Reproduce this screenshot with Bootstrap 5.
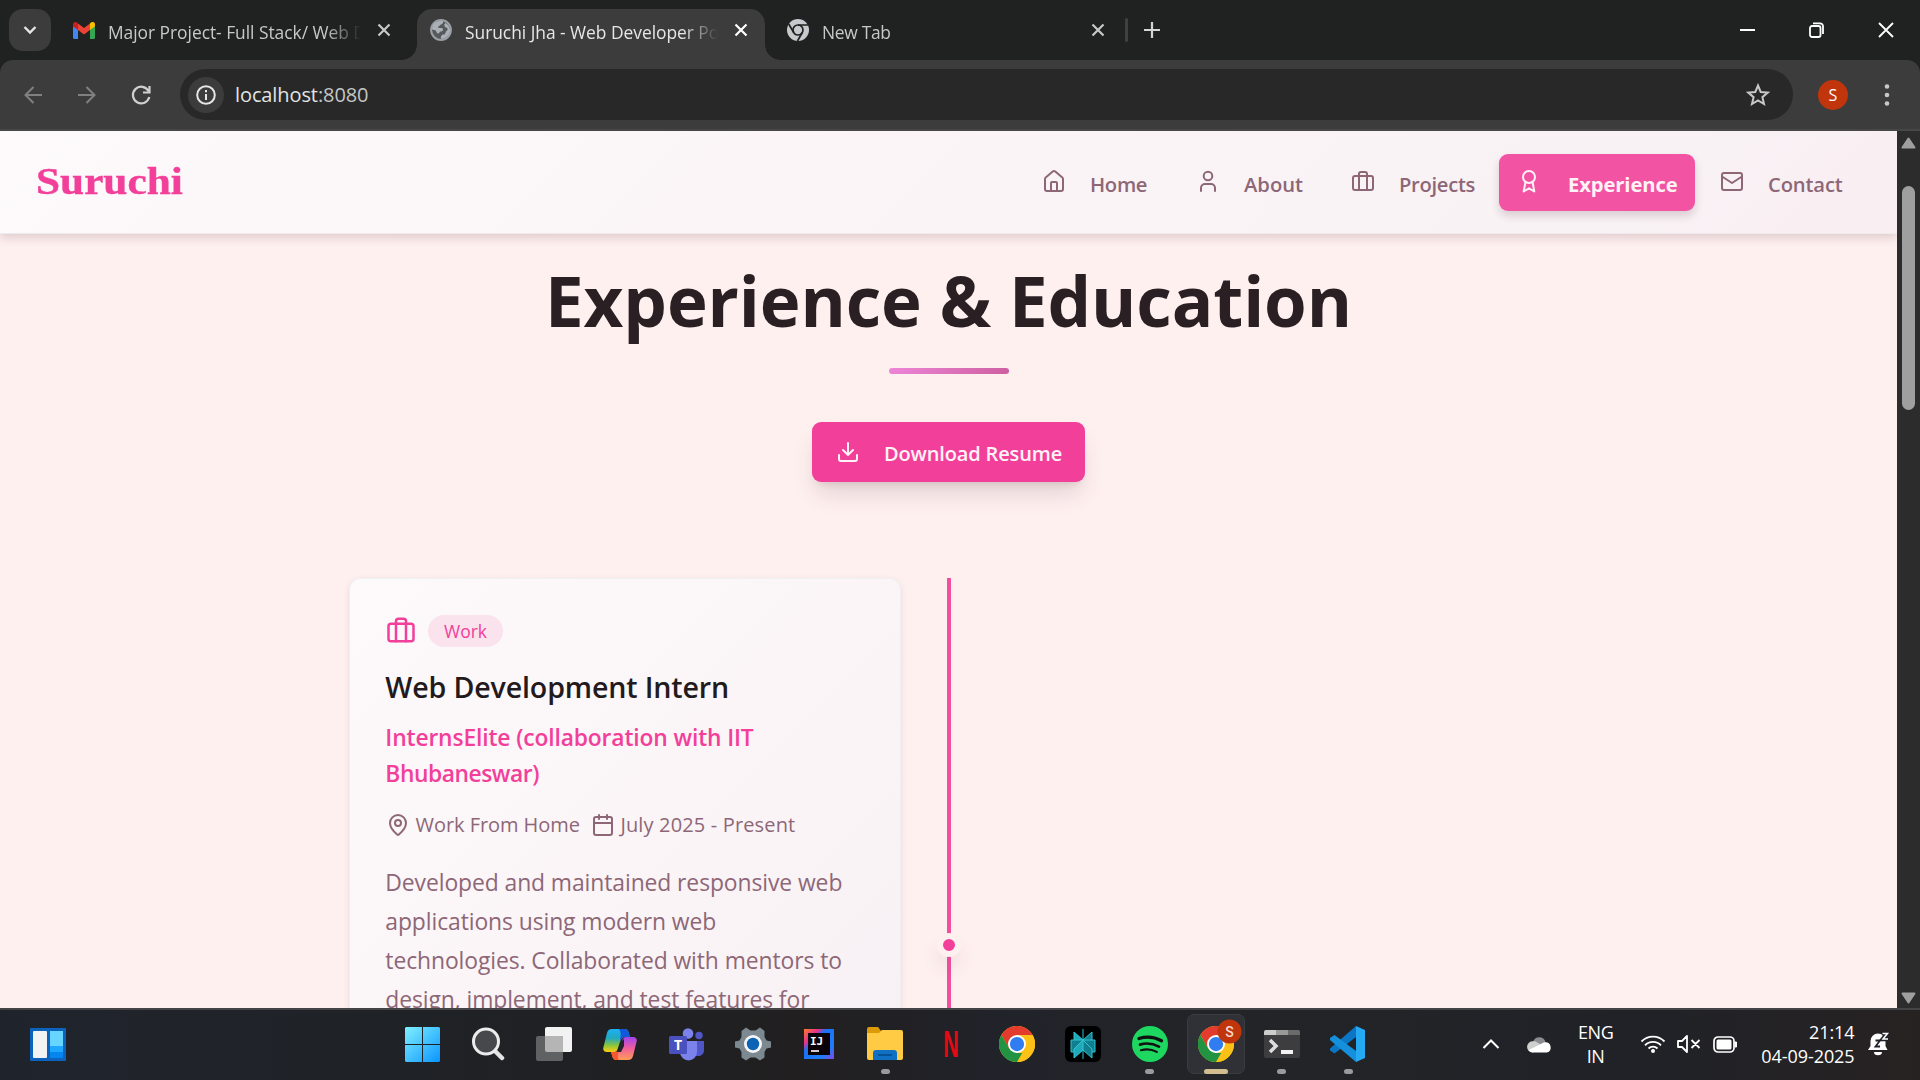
<!DOCTYPE html>
<html lang="en">
<head>
<meta charset="utf-8">
<title>Suruchi Jha - Web Developer Portfolio</title>
<link href="https://cdn.jsdelivr.net/npm/bootstrap@5.3.0/dist/css/bootstrap.min.css" rel="stylesheet">
<style>
:root{--pink:#f2409a;--mauve:#8e6777;--ink:#2a1f23}
body{width:1920px;height:1080px;overflow:hidden;font-family:"Open Sans","Noto Sans",sans-serif;background:#fff0f0}
svg{display:block;flex:none}
.t{white-space:nowrap;display:inline-block}
/* browser chrome */
.tabstrip{height:60px;background:#202221;padding:9px 0 0 9px;color:#c7c9c8;font-size:17.4px}
.tabsearch{width:42px;height:42px;border-radius:14px;background:#3c3c3c}
.btab{height:51px;width:348px;padding:0 17px 9px 13px;position:relative}
.btab.first{width:366px;padding-left:22px;padding-right:26px}
.btab.last{margin-left:9px;width:343px;padding-right:12px}
.btab .ttl{margin-left:13px;overflow:hidden;flex:1 1 0;line-height:28px;padding-top:3px;margin-right:16px;white-space:nowrap;letter-spacing:-.03px;-webkit-mask-image:linear-gradient(90deg,#000 86%,transparent 100%)}
.btab.last .ttl{letter-spacing:-.3px}
.btab.on{background:#3c3c3c;border-radius:15px 15px 0 0;color:#e6e6e6}
.btab.on:before,.btab.on:after{content:"";position:absolute;bottom:0;width:15px;height:15px}
.btab.on:before{left:-15px;background:radial-gradient(circle at 0 0,transparent 14.5px,#3c3c3c 15px)}
.btab.on:after{right:-15px;background:radial-gradient(circle at 100% 0,transparent 14.5px,#3c3c3c 15px)}
.tsep{width:3px;height:24px;border-radius:2px;background:#3f4140;margin:9px 0 0 8px}
.plus{margin:13px 0 0 16px}
.winbtns{margin-left:auto;padding-right:26px;gap:54px;height:41px}
.toolbelt{height:71px;background:#202221}
.toolin{height:71px;background:#3c3c3c;border-radius:13px 13px 0 0;border-bottom:2px solid #474747;padding:9px 20px 9px 20px}
.toolin>svg+svg{margin-left:28px}
.omni{height:51px;width:1613px;border-radius:26px;background:#282828;margin-left:26px;padding:0 23px 0 8px}
.infoc{width:36px;height:36px;border-radius:50%;background:#3c3c3c}
.url{font-size:20px;color:#e3e3e3;margin-left:11px;letter-spacing:-.1px}
.url span{color:#c4c7c5}
.avat{width:30px;height:30px;border-radius:50%;background:#c0350c;color:#fff;font-size:16px;margin-left:25px}
.dots{margin-right:9px}
/* page */
.viewport{height:877px;overflow:hidden}
.site{width:1897px;height:877px;overflow:hidden;background:#fff0f0;position:relative}
.topnav{height:103px;padding:0 36px;background:linear-gradient(135deg,#fdfafb 0%,#fbf5f7 40%,#f8f2f5 85%,#faeef2 100%);border-bottom:1px solid #f0e9ed;box-shadow:0 4px 9px rgba(60,20,30,.16);position:relative;z-index:2}
.logo{font-family:"Liberation Serif",serif;font-weight:700;font-size:37px;color:var(--pink);line-height:40px;transform-origin:0 50%;transform:scaleX(1.17);-webkit-text-stroke:.4px var(--pink)}
.navs{gap:6px}
.navl{height:57px;padding:0 0 0 18px;border-radius:9px;color:var(--mauve);font-size:20.2px;font-weight:600;gap:24px}
.navl svg{margin-bottom:2px}
.navl .t{padding-top:4px}
.navl.on{background:#f353a3;color:#fff3f7;gap:27px;box-shadow:0 5px 9px rgba(60,20,30,.16);letter-spacing:-.1px;font-weight:700}
.w-home{width:148px;letter-spacing:-.3px}.w-about{width:149px}.w-proj{width:160.6px;letter-spacing:-.3px}.w-exp{width:196px;margin-left:-.6px}.w-cont{width:160px;letter-spacing:-.15px}
.w-cont.navl{padding-left:19px}
h1.head{font-size:69px;line-height:72px;font-weight:700;color:var(--ink);margin:30px 0 32px;letter-spacing:-.1px}
.rule{width:120px;height:6px;border-radius:3px;background:linear-gradient(135deg,#ee85d8,#cd5fa0)}
.dl{width:273px;height:60px;border-radius:9px;background:var(--pink);color:#fff3f7;font-size:20px;font-weight:600;margin-top:48px;padding:0 0 0 24px;gap:24px;letter-spacing:-.15px;box-shadow:0 15px 23px -4px rgba(60,20,30,.14),0 6px 9px -6px rgba(60,20,30,.16)}
.dl .t{padding-top:4px}
.tl{margin-top:96px;padding-left:349px;height:500px}
.job{width:552px;height:500px;border:1px solid #eef0f6;border-radius:12px;background:linear-gradient(135deg,#fdfafb 0%,#fbf5f7 50%,#f7f1f5 100%);padding:36px;box-shadow:0 2px 6px rgba(60,20,30,.10)}
.kind{gap:12px;color:var(--pink)}
.kind svg{margin-top:-2px}
.pillw{height:32px;width:75px;border-radius:16px;background:#fae3ed;color:var(--pink);font-size:17.5px;font-weight:500}
.job h3{font-size:28.6px;line-height:36px;font-weight:600;color:#231a1d;margin:22px 0 15px -.7px;letter-spacing:-.15px}
.co{font-size:22.8px;line-height:36px;font-weight:600;color:var(--pink);letter-spacing:-.13px;margin-left:-.7px}
.co .l2{letter-spacing:-.45px}
.meta{font-size:20px;line-height:30px;color:var(--mauve);margin-top:18px;gap:11px;letter-spacing:-.05px}
.meta>span{gap:5.5px}
.meta .when{letter-spacing:.15px}
.meta svg{margin-top:-1px}
.desc{font-size:22.9px;line-height:39px;color:var(--mauve);margin:23px 0 0 -.7px;letter-spacing:-.09px}
.axis{width:3.5px;margin-left:46px;background:#f2509f;position:relative}
.axis i{position:absolute;left:-10px;top:355px;width:24px;height:24px;border-radius:50%;background:var(--pink);border:6px solid #fff0f0;box-shadow:0 12px 18px rgba(60,20,30,.08)}
.sbar{width:23px;background:#2c2c2c;padding:6px 0 4px}
.thumb{width:13px;height:224px;border-radius:7px;background:#9f9f9f;margin-top:37px}
/* taskbar */
.tbar{height:72px;border-top:2px solid #444447;padding-bottom:2px;background:linear-gradient(90deg,#1f242c 0,#20232a 8%,#1f2226 22%,#211f20 42%,#21232a 52%,#222427 66%,#202228 85%,#272222 100%);color:#fff}
.widgets{margin-left:30px}
.apps{margin-left:323px}
.slot{width:66.15px;height:70px;position:relative}
.slot b{position:absolute;bottom:5px;width:9px;height:5px;border-radius:3px;background:#9a9a9c}
.slot.on:before{content:"";position:absolute;inset:5px 4px 5px;border-radius:7px;background:#2f3136;border:1px solid #3a3c40}
.slot.on svg{position:relative}
.slot.on>svg{margin-left:8px}
.slot.on b{width:24px;background:#d2bd90}
.tray>*{flex:none}
.tray{margin-left:100.5px}
.sysx{font-size:18px;line-height:24px;letter-spacing:-.4px}
.clock{width:110px;margin-left:7px;margin-top:-1px}
.clock .t{letter-spacing:-.05px}
.lang{width:50px;margin-left:19px}
</style>
</head>
<body>
<svg width="0" height="0" class="position-absolute"><defs>
<symbol id="x" viewBox="0 0 14 14"><path d="M1.500 1.500l11 11M12.500 1.500l-11 11" stroke="currentColor" stroke-width="2.200" fill="none"/></symbol>
<symbol id="brief" viewBox="0 0 24 24"><g fill="none" stroke="currentColor" stroke-width="2" stroke-linecap="round" stroke-linejoin="round"><rect x="2" y="7" width="20" height="14" rx="2"/><path d="M16 21V5a2 2 0 0 0-2-2h-4a2 2 0 0 0-2 2v16"/></g></symbol>
<symbol id="chrome" viewBox="0 0 48 48"><circle cx="24" cy="24" r="24" fill="#fbc116"/><path d="M24 24L13.600 30 3.200 12A24 24 0 0 1 44.800 12H24z" fill="#e33b2e"/><path d="M3.200 12L13.600 30 24 36h10.400L24 48A24 24 0 0 1 3.200 12z" fill="#229342"/><path d="M24 12h20.800A24 24 0 0 1 24 48l10.400-18z" fill="#fbc116"/><circle cx="24" cy="24" r="12" fill="#fff"/><circle cx="24" cy="24" r="9.500" fill="#2f7df0"/></symbol>
</defs></svg>

<header>
<div class="tabstrip d-flex align-items-start">
  <div class="tabsearch d-flex align-items-center justify-content-center"><svg width="14" height="10" viewBox="0 0 14 10"><path d="M1.500 2L7 7.500 12.500 2" fill="none" stroke="#e6e6e6" stroke-width="2.400"/></svg></div>
  <div class="btab first d-flex align-items-center">
    <svg width="22" height="17" viewBox="0 0 22 17"><path d="M0 3v12.500A1.500 1.500 0 0 0 1.500 17H5V7z" fill="#4285f4"/><path d="M22 3v12.500a1.500 1.500 0 0 1-1.500 1.500H17V7z" fill="#34a853"/><path d="M17 1.500V8l5-3.700V2.400C22 .2 19.500-.8 17.800.6z" fill="#fbbc04"/><path d="M5 8V1.500l6 4.500 6-4.500V8l-6 4.500z" fill="#ea4335"/><path d="M0 2.400v2L5 8V1.500L4.200.7C2.500-.8 0 .2 0 2.400z" fill="#c5221f"/></svg>
    <div class="ttl">Major Project- Full Stack/ Web D</div>
    <svg width="14" height="14"><use href="#x"/></svg>
  </div>
  <div class="btab on d-flex align-items-center">
    <svg width="22" height="22" viewBox="0 0 22 22"><circle cx="11" cy="11" r="9.900" fill="#56595c" stroke="#9aa0a6" stroke-width="2"/><path d="M2 9C3 4 7 2 11 2h2c.5 2-.5 3-2 3.500-1.500.5-1 1.500-2.500 2S8 9 10 9s3 0 3 1.500-1 2-2.500 2S10 15 8 14.500 6.500 11 4.500 11 2 10.500 2 9z" fill="#aab0b6"/><path d="M15.500 4c3 1.500 5 5 4.500 8.500-1 4-4 7-8.500 7.500-1.500-1-.5-3 .5-4s2 0 3-1 0-2 1.500-3 1.500-2 .5-3-2-.500-2.500-2 0-2 1-3z" fill="#aab0b6"/></svg>
    <div class="ttl">Suruchi Jha - Web Developer Po</div>
    <svg width="14" height="14" class="text-white"><use href="#x"/></svg>
  </div>
  <div class="btab last d-flex align-items-center">
    <svg width="22" height="22" viewBox="0 0 22 22"><circle cx="11" cy="11" r="11" fill="#c7c9cc"/><g fill="none" stroke="#202221" stroke-width="1.700"><circle cx="11" cy="11" r="5"/><path d="M11 6h10M6.700 13.500L1.700 5M15.300 13.500L10.500 22"/></g></svg>
    <div class="ttl">New Tab</div>
    <svg width="14" height="14"><use href="#x"/></svg>
  </div>
  <div class="tsep"></div>
  <svg class="plus" width="16" height="16" viewBox="0 0 16 16"><path d="M8 0v16M0 8h16" stroke="#d5d5d5" stroke-width="2.200"/></svg>
  <div class="winbtns d-flex align-items-center">
    <svg width="15" height="16"><path d="M0 8h15" stroke="#fff" stroke-width="2"/></svg>
    <svg width="15" height="16" viewBox="0 0 15 16" fill="none" stroke="#fff" stroke-width="1.800"><rect x="1" y="4" width="10.500" height="11" rx="2"/><path d="M4 1.300h7a3 3 0 0 1 3 3V12"/></svg>
    <svg width="16" height="16"><path d="M1 1l14 14M15 1L1 15" stroke="#fff" stroke-width="1.800"/></svg>
  </div>
</div>
<div class="toolbelt"><div class="toolin d-flex align-items-center">
  <svg width="26" height="20" viewBox="0 0 26 20" fill="none" stroke="#808080" stroke-width="2"><path d="M22 10H6M13.500 2L5.500 10l8 8"/></svg>
  <svg width="26" height="20" viewBox="0 0 26 20" fill="none" stroke="#808080" stroke-width="2"><path d="M4 10h16M12.500 2l8 8-8 8"/></svg>
  <svg width="26" height="22" viewBox="0 0 26 22" fill="none" stroke="#d0d0d0" stroke-width="2.200"><path d="M20.500 7A8.300 8.300 0 1 0 21.300 13M21.500 2v6.500H15"/></svg>
  <div class="omni d-flex align-items-center">
    <div class="infoc d-flex align-items-center justify-content-center"><svg width="20" height="20" viewBox="0 0 20 20"><circle cx="10" cy="10" r="8.800" fill="none" stroke="#e6e6e6" stroke-width="2"/><path d="M10 9v6M10 5v2.200" stroke="#e6e6e6" stroke-width="2"/></svg></div>
    <div class="url"><div class="t">localhost<span>:8080</span></div></div>
    <svg class="ms-auto" width="24" height="24" viewBox="0 0 24 24"><path d="M12 2.500l2.700 6.500 7 .6-5.300 4.600 1.600 6.800-6-3.600L6 21l1.600-6.800L2.300 9.600l7-.6z" fill="none" stroke="#c8c8c8" stroke-width="2"/></svg>
  </div>
  <div class="avat d-flex align-items-center justify-content-center">S</div>
  <svg width="8" height="28" class="dots ms-auto" fill="#c8c8c8"><circle cx="4" cy="5.500" r="2.300"/><circle cx="4" cy="14" r="2.300"/><circle cx="4" cy="22.500" r="2.300"/></svg>
</div></div>
</header>

<div class="viewport d-flex">
<main class="site">
  <nav class="topnav d-flex align-items-center">
    <a class="logo text-decoration-none t me-auto">Suruchi</a>
    <div class="navs d-flex">
      <a class="navl w-home d-flex align-items-center text-decoration-none"><svg width="24" height="24" viewBox="0 0 24 24" fill="none" stroke="currentColor" stroke-width="2" stroke-linecap="round" stroke-linejoin="round"><path d="M3 10a2 2 0 0 1 .7-1.500l7-6a2 2 0 0 1 2.600 0l7 6A2 2 0 0 1 21 10v10a2 2 0 0 1-2 2H5a2 2 0 0 1-2-2z"/><path d="M9 22v-8a1 1 0 0 1 1-1h4a1 1 0 0 1 1 1v8"/></svg><span class="t">Home</span></a>
      <a class="navl w-about d-flex align-items-center text-decoration-none"><svg width="24" height="24" viewBox="0 0 24 24" fill="none" stroke="currentColor" stroke-width="2" stroke-linecap="round"><circle cx="12" cy="7" r="4.300"/><path d="M19 22v-3a4 4 0 0 0-4-4H9a4 4 0 0 0-4 4v3"/></svg><span class="t">About</span></a>
      <a class="navl w-proj d-flex align-items-center text-decoration-none"><svg width="24" height="24"><use href="#brief"/></svg><span class="t">Projects</span></a>
      <a class="navl on w-exp d-flex align-items-center text-decoration-none"><svg width="24" height="24" viewBox="0 0 24 24" fill="none" stroke="currentColor" stroke-width="2" stroke-linecap="round" stroke-linejoin="round"><circle cx="12" cy="8" r="6"/><path d="M15.500 12.900L17.300 22.500 12 19.300l-5.300 3.200L8.500 12.900"/></svg><span class="t">Experience</span></a>
      <a class="navl w-cont d-flex align-items-center text-decoration-none"><svg width="24" height="24" viewBox="0 0 24 24" fill="none" stroke="currentColor" stroke-width="2" stroke-linecap="round" stroke-linejoin="round"><rect x="2" y="4" width="20" height="17" rx="2"/><path d="M22 7.500l-10 6.500L2 7.500"/></svg><span class="t">Contact</span></a>
    </div>
  </nav>
  <div class="d-flex flex-column align-items-center">
    <h1 class="head"><span class="t">Experience &amp; Education</span></h1>
    <div class="rule"></div>
    <a class="dl d-flex align-items-center text-decoration-none"><svg width="24" height="24" viewBox="0 0 24 24" fill="none" stroke="currentColor" stroke-width="2" stroke-linecap="round" stroke-linejoin="round"><path d="M21 15v4a2 2 0 0 1-2 2H5a2 2 0 0 1-2-2v-4M7 10l5 5 5-5M12 15V3"/></svg><span class="t">Download Resume</span></a>
  </div>
  <section class="tl d-flex">
    <article class="job">
      <div class="kind d-flex align-items-center"><svg width="30" height="30"><use href="#brief"/></svg><span class="pillw d-flex align-items-center justify-content-center">Work</span></div>
      <h3>Web Development Intern</h3>
      <div class="co"><span class="t">InternsElite (collaboration with IIT</span><br><span class="t l2">Bhubaneswar)</span></div>
      <div class="meta d-flex">
        <span class="d-flex align-items-center"><svg width="24" height="24" viewBox="0 0 24 24" fill="none" stroke="currentColor" stroke-width="2"><path d="M20 10c0 5-5.500 10.200-7.400 11.800a1 1 0 0 1-1.200 0C9.500 20.200 4 15 4 10a8 8 0 0 1 16 0"/><circle cx="12" cy="10" r="3"/></svg><span class="t">Work From Home</span></span>
        <span class="when d-flex align-items-center"><svg width="24" height="24" viewBox="0 0 24 24" fill="none" stroke="currentColor" stroke-width="2" stroke-linecap="round"><rect x="3" y="4" width="18" height="18" rx="2"/><path d="M8 2v4M16 2v4M3 10h18"/></svg><span class="t">July 2025 - Present</span></span>
      </div>
      <div class="desc"><span class="t">Developed and maintained responsive web</span><br><span class="t">applications using modern web</span><br><span class="t">technologies. Collaborated with mentors to</span><br><span class="t">design, implement, and test features for</span></div>
    </article>
    <div class="axis"><i></i></div>
  </section>
</main>
<div class="sbar d-flex flex-column align-items-center">
  <svg width="15" height="12"><path d="M7.500 1.500L13.500 10.500H1.500z" fill="#9f9f9f" stroke="#9f9f9f" stroke-width="2" stroke-linejoin="round"/></svg>
  <div class="thumb"></div>
  <svg class="mt-auto" width="15" height="12"><path d="M7.500 10.500L13.500 1.500H1.500z" fill="#9f9f9f" stroke="#9f9f9f" stroke-width="2" stroke-linejoin="round"/></svg>
</div>
</div>

<footer class="tbar d-flex align-items-center">
  <svg class="widgets" width="36" height="33" viewBox="0 0 36 33"><rect width="36" height="33" rx="1" fill="#0b63bb"/><rect x="3" y="3" width="14" height="27" rx="1" fill="#f3f3f3"/><path d="M20 3h13v15H20z" fill="#66d5ff"/><path d="M20 18h13v6H20z" fill="#1ea7ff"/><path d="M20 24h13v6H20z" fill="#0585ee"/></svg>
  <div class="apps d-flex">
    <div class="slot d-flex align-items-center justify-content-center"><svg width="35" height="35" viewBox="0 0 35 35"><defs><linearGradient id="wg" x1="0" y1="0" x2="35" y2="35" gradientUnits="userSpaceOnUse"><stop stop-color="#80f0ff"/><stop offset="1" stop-color="#0a95ff"/></linearGradient></defs><path d="M1 0h16v17H0V1zM18 0h16l1 1v16H18zM0 18h17v17H1l-1-1zM18 18h17v16l-1 1H18z" fill="url(#wg)"/></svg></div>
    <div class="slot d-flex align-items-center justify-content-center"><svg width="34" height="34" viewBox="0 0 34 34"><path d="M23 23l8 8" stroke="#e3e3e3" stroke-width="4.500" stroke-linecap="round"/><circle cx="15" cy="14.500" r="12.500" fill="#46484b" stroke="#ececec" stroke-width="3"/></svg></div>
    <div class="slot d-flex align-items-center justify-content-center"><svg width="36" height="34" viewBox="0 0 36 34"><rect x="9" y="0" width="27" height="25" rx="2" fill="#f2f2f2"/><rect x="0" y="9" width="27" height="25" rx="2" fill="#606163"/><path d="M9 9h16a2 2 0 0 1 2 2v14H11a2 2 0 0 1-2-2z" fill="#b5b5b5"/></svg></div>
    <div class="slot d-flex align-items-center justify-content-center"><svg width="34" height="31" viewBox="0 0 34 31"><defs><linearGradient id="c1" x1="0" y1="0" x2="0" y2="1"><stop stop-color="#1bb2f2"/><stop offset=".4" stop-color="#22a8c0"/><stop offset=".7" stop-color="#86c440"/><stop offset="1" stop-color="#ffcd12"/></linearGradient><linearGradient id="c2" x1="0" y1="0" x2="0" y2="1"><stop stop-color="#a044f0"/><stop offset=".5" stop-color="#f25f9a"/><stop offset="1" stop-color="#ff9d55"/></linearGradient></defs><path d="M9 0h13c2 0 3 1.500 3.500 3L27 8h-5c-3 0-4 2-5 5l-2 6c-1 3-2 4-4 4H4c-3 0-4.500-2-3.500-5L4 4c.8-2.500 2-4 5-4z" fill="url(#c1)"/><path d="M16 0h6c2 0 3 1.500 3.500 3L27 8h-5c-3 0-4 1.500-5 4 0-4 2-8-1-12z" fill="#1358d8"/><path d="M25 31H13c-2 0-3-1.500-3.500-3L8 23h4c3 0 4-2 5-5l2-6c1-3 2-4 4-4h7c3 0 4.500 2 3.500 5L30 27c-.8 2.500-2 4-5 4z" fill="url(#c2)"/><path d="M8 23h4c2 0 3-1 4-2-1 4-2 8 0 10h-3c-2 0-3-1.500-3.500-3z" fill="#f7582f"/><path d="M17.500 13L21 10v7l-3 6h-4z" fill="#22242a"/></svg></div>
    <div class="slot d-flex align-items-center justify-content-center"><svg width="36" height="33" viewBox="0 0 36 33"><circle cx="30" cy="7.500" r="3.700" fill="#4e56c8"/><circle cx="19" cy="5.500" r="5.300" fill="#7b83eb"/><path d="M27 13h8v9.500c0 3.500-3 5.500-5.500 5.500H26z" fill="#4e56c8"/><path d="M11 13h17v11a8.500 8.500 0 0 1-17 0z" fill="#7b83eb"/><rect x="0" y="8" width="18" height="18" rx="1.500" fill="#4a50bd"/><text x="9" y="22" text-anchor="middle" font-family="Open Sans" font-weight="700" font-size="14" fill="#fff">T</text></svg></div>
    <div class="slot d-flex align-items-center justify-content-center"><svg width="36" height="34" viewBox="0 0 36 34"><path d="M6.500 4L11 0.500l4.500 3h5L25 .5 29.500 4v6l2 3.500 4.500 1v6l-4.500 1-2 3.500v5.500L25 33.500l-4.500-3h-5l-4.500 3-4.500-3V25l-2-3.500-4.500-1v-6l4.500-1L6.500 10z" fill="#7d8990"/><circle cx="18" cy="17" r="9" fill="#f6f6f6"/><circle cx="18" cy="17" r="6.200" fill="#0c62b4"/></svg></div>
    <div class="slot d-flex align-items-center justify-content-center"><svg width="30" height="30" viewBox="0 0 30 30"><defs><linearGradient id="ij" x1="0" y1="0" x2="1" y2="1"><stop stop-color="#ff7a2a"/><stop offset=".25" stop-color="#e8308c"/><stop offset=".38" stop-color="#1a72f5"/><stop offset=".75" stop-color="#1d7df8"/><stop offset="1" stop-color="#8a45e6"/></linearGradient></defs><rect width="30" height="30" fill="url(#ij)"/><rect x="4" y="4" width="22" height="22" fill="#0a0208"/><text x="6" y="15.500" font-family="DejaVu Sans Mono" font-weight="700" font-size="11" fill="#fff">IJ</text><path d="M7 22h8" stroke="#fff" stroke-width="1.600"/></svg></div>
    <div class="slot d-flex align-items-center justify-content-center"><svg width="36" height="34" viewBox="0 0 36 34"><path d="M0 2a2 2 0 0 1 2-2h9l3 4H34v6H0z" fill="#dc9a06"/><path d="M0 6h12l3-3h19a2 2 0 0 1 2 2v26a2 2 0 0 1-2 2H2a2 2 0 0 1-2-2z" fill="#ffcb45"/><path d="M6 33v-7a3 3 0 0 1 3-3h18a3 3 0 0 1 3 3v7z" fill="#0f70c4"/><path d="M11 28h14" stroke="#064a86" stroke-width="1.500"/></svg><b></b></div>
    <div class="slot d-flex align-items-center justify-content-center"><svg width="18" height="28" viewBox="0 0 18 28"><text transform="translate(9 27) scale(.58 1)" text-anchor="middle" font-family="Liberation Sans" font-weight="700" font-size="37" fill="#e50914">N</text></svg></div>
    <div class="slot d-flex align-items-center justify-content-center"><svg width="36" height="36"><use href="#chrome"/></svg></div>
    <div class="slot d-flex align-items-center justify-content-center"><svg width="36" height="36" viewBox="0 0 36 36"><rect width="36" height="36" rx="6" fill="#000"/><path d="M18 14L9 6v8H6v12h3v6l9-8 9 8v-6h3V14h-3V6z" fill="#127f8f"/><path d="M18 14L9 6v8h9L9 23v9l9-8z" fill="#1fa9b9"/><path d="M18 3v30M18 14l-9-8v8M18 14l9-8v8M6 14h24v12h-3M6 14v12h3M18 14l-9 9v9l9-8 9 8v-9z" fill="none" stroke="#2fc3d3" stroke-width="1"/></svg></div>
    <div class="slot d-flex align-items-center justify-content-center"><svg width="36" height="36" viewBox="0 0 36 36"><circle cx="18" cy="18" r="18" fill="#1ed760"/><g fill="none" stroke="#111" stroke-linecap="round"><path d="M7 12.500c7-2.200 16-1.300 22.500 2.200" stroke-width="3.300"/><path d="M8 18.600c6-1.900 13-1.100 19 2" stroke-width="2.700"/><path d="M9 24.200c5.500-1.500 11-.9 15.800 1.700" stroke-width="2.200"/></g></svg><b></b></div>
    <div class="slot on d-flex align-items-center justify-content-center"><svg width="44" height="50" viewBox="0 0 44 50"><svg x="0" y="7" width="36" height="36"><use href="#chrome"/></svg><circle cx="31.500" cy="12.500" r="12" fill="#c0350c"/><text x="31.500" y="17.500" text-anchor="middle" font-family="Roboto" font-size="14" font-weight="500" fill="#f3d9cf">S</text></svg><b></b></div>
    <div class="slot d-flex align-items-center justify-content-center"><svg width="36" height="28" viewBox="0 0 36 28"><rect width="36" height="28" rx="2" fill="#3d3d3f"/><path d="M0 5V2a2 2 0 0 1 2-2h10v5z" fill="#ccc"/><path d="M12 0h12v5H12z" fill="#999"/><path d="M24 0h10a2 2 0 0 1 2 2v3H24z" fill="#6b6b6b"/><path d="M6 10l6 6-6 6" fill="none" stroke="#ddd" stroke-width="3.500"/><path d="M17 22h12" stroke="#f2f2f2" stroke-width="4"/></svg><b></b></div>
    <div class="slot d-flex align-items-center justify-content-center"><svg width="36" height="36" viewBox="0 0 36 36"><path d="M26 0v11L4.500 27.500 0 24.500v-2z" fill="#0a76c4"/><path d="M26 36V25L4.500 9 0 12v2z" fill="#1490dc"/><path d="M26 0l9 4v28l-9 4z" fill="#25a9f2"/></svg><b></b></div>
  </div>
  <div class="tray d-flex align-items-center">
  <svg width="18" height="12"><path d="M1.500 10L9 2.500 16.500 10" fill="none" stroke="#fff" stroke-width="2"/></svg>
  <svg width="25" height="17" viewBox="0 0 25 17" style="margin-left:27px"><path d="M6 6a6.500 6.500 0 0 1 12.500 0L13 10z" fill="#8c8d90"/><path d="M5.500 16.500A5.500 5.500 0 0 1 6 5.200c2 0 3 .4 4.500 1.300L18 11z" fill="#cfcfcf"/><path d="M5.500 16.500a5 5 0 0 1-4-2.500L14 8c1.500-1.200 3-1.800 4.500-1.800a5.200 5.200 0 0 1 1 10.300z" fill="#fff"/></svg>
  <div class="sysx lang text-center">ENG<br>IN</div>
  <svg width="26" height="20" viewBox="0 0 26 20" fill="none" stroke="#fff" stroke-width="1.800" style="margin-left:19px"><path d="M1.500 7.500a16 16 0 0 1 23 0M5 11.300a11 11 0 0 1 16 0M8.500 14.500a6.400 6.400 0 0 1 9 0"/><circle cx="13" cy="17" r="2" fill="#fff" stroke="none"/></svg>
  <svg width="24" height="20" viewBox="0 0 24 20" fill="none" stroke="#fff" stroke-width="1.800" stroke-linejoin="round" style="margin-left:11px"><path d="M1 7h4l5-5v16l-5-5H1zM14.500 6l8 8M22.500 6l-8 8"/></svg>
  <svg width="25" height="17" viewBox="0 0 25 17" style="margin-left:12px"><rect x="1" y="1" width="20" height="15" rx="4" fill="none" stroke="#fff" stroke-width="1.700"/><rect x="3.500" y="3.500" width="15" height="10" rx="1.500" fill="#fff"/><path d="M22 6h1.500v5H22z" fill="#fff" stroke="#fff"/></svg>
  <div class="sysx clock text-end"><span class="t">21:14</span><br><span class="t">04-09-2025</span></div>
  <svg width="22" height="24" viewBox="0 0 22 24" style="margin-left:13px"><path d="M0 18l2.500-4V9a7.500 7.500 0 0 1 15 0v5l2 4zM6 20h8a4 3.200 0 0 1-8 0z" fill="#fff"/><path d="M14.500 1.500h5L15 7h5" stroke="#202228" stroke-width="4.500" fill="none"/><path d="M14.500 1.500h5L15 7h5" stroke="#fff" stroke-width="1.500" fill="none"/><path d="M7.500 8.500h4.500l-4.500 6H12" stroke="#202228" stroke-width="1.800" fill="none"/></svg>
  </div>
</footer>
<script src="https://cdn.jsdelivr.net/npm/bootstrap@5.3.0/dist/js/bootstrap.bundle.min.js"></script>
</body>
</html>
